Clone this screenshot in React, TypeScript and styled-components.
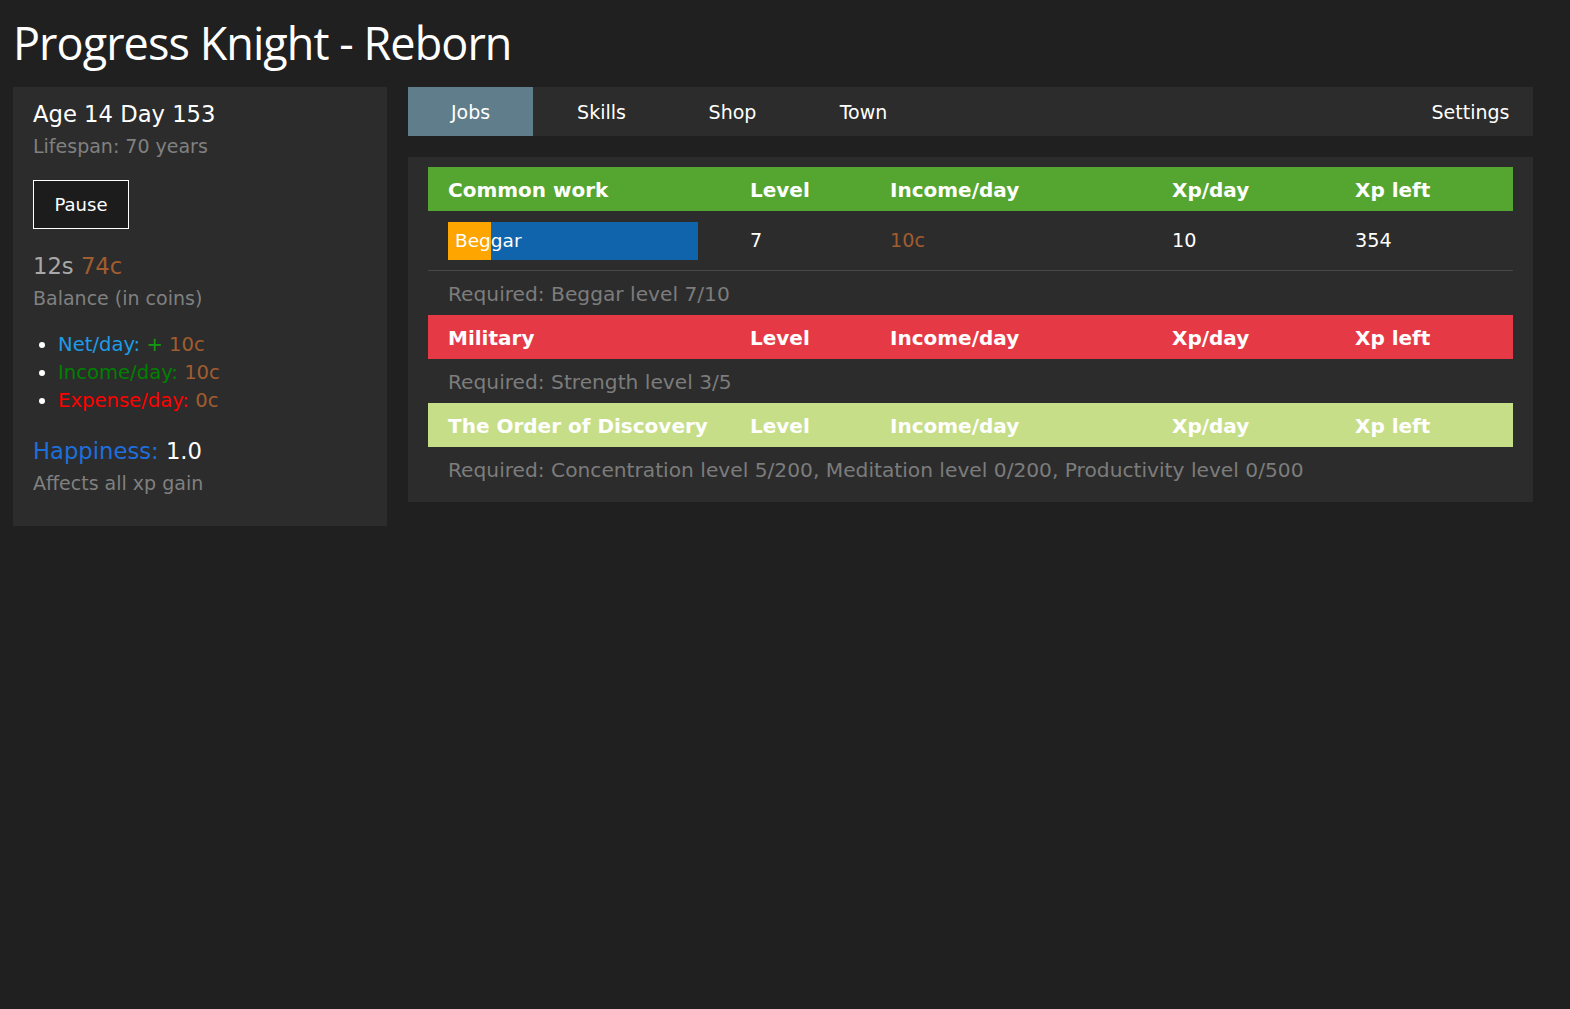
import React from "react";
import styled, { createGlobalStyle } from "styled-components";

const Global = createGlobalStyle`
  html, body { margin: 0; padding: 0; background: #202020; }
  body { font-family: "DejaVu Sans", Verdana, sans-serif; color: #ffffff; }
  * { box-sizing: border-box; }
`;

const Page = styled.div`
  padding: 13px 37px 0 13px;
  min-height: 1009px;
`;

const Title = styled.h1`
  margin: 0 0 14px 0;
  font-family: "Open Sans", sans-serif;
  font-weight: 400;
  font-size: 45px;
  line-height: 60px;
  letter-spacing: -0.95px;
  color: #ffffff;
`;

const Layout = styled.div`
  display: flex;
  align-items: flex-start;
  gap: 21px;
`;

const Side = styled.div`
  width: 374px;
  flex: none;
  background: #2c2c2c;
  padding: 11px 20px 27px 20px;
`;

const Big = styled.div<{ $color?: string }>`
  font-size: 22.7px;
  line-height: 32px;
  color: ${(p) => p.$color || "#ffffff"};
`;

const Sub = styled.div`
  font-size: 19px;
  line-height: 32px;
  color: #808080;
`;

const PauseButton = styled.button`
  display: block;
  margin: 18px 0 21px 0;
  width: 96px;
  height: 49px;
  background: #1c1c1c;
  border: 1px solid #ffffff;
  color: #ffffff;
  font-family: "DejaVu Sans", Verdana, sans-serif;
  font-size: 18px;
  padding: 0;
`;

const C = styled.span<{ $c: string }>`
  color: ${(p) => p.$c};
`;

const List = styled.ul`
  margin: 17px 0 20px 0;
  padding-left: 25px;
  font-size: 19.6px;
  line-height: 28px;
  li::marker { color: #ffffff; }
`;

const Main = styled.div`
  flex: 1;
  display: flex;
  flex-direction: column;
  gap: 21px;
`;

const Nav = styled.div`
  display: flex;
  gap: 6px;
  height: 49px;
  background: #2c2c2c;
`;

const Tab = styled.div<{ $active?: boolean; $right?: boolean }>`
  width: 125px;
  display: flex;
  align-items: center;
  justify-content: center;
  font-size: 19px;
  background: ${(p) => (p.$active ? "#607d8b" : "transparent")};
  margin-left: ${(p) => (p.$right ? "auto" : "0")};
  color: #ffffff;
`;

const Panel = styled.div`
  background: #2c2c2c;
  padding: 10px 20px 11px 20px;
`;

const Row = styled.div`
  display: grid;
  grid-template-columns: 322px 140px 282px 183px 1fr;
  align-items: center;
`;

const HeadRow = styled(Row)<{ $bg: string }>`
  background: ${(p) => p.$bg};
  height: 44px;
  padding-top: 1px;
  font-family: "DejaVu Sans", Verdana, sans-serif;
  font-weight: 700;
  font-size: 20px;
  color: #ffffff;
  & > div:first-child { padding-left: 20px; }
`;

const JobRow = styled(Row)`
  height: 60px;
  border-bottom: 1px solid #474747;
  font-size: 19.2px;
  & > div:first-child { padding-left: 20px; }
`;

const Bar = styled.div`
  position: relative;
  width: 250px;
  height: 38px;
  background: #0f64ab;
  display: flex;
  align-items: center;
  padding-left: 7px;
`;

const BarFill = styled.div`
  position: absolute;
  left: 0;
  top: 0;
  bottom: 0;
  background: #ffa500;
`;

const BarLabel = styled.span`
  position: relative;
  color: #ffffff;
  font-size: 18.5px;
`;

const Required = styled.div`
  height: 44px;
  display: flex;
  align-items: center;
  padding: 2px 0 0 20px;
  font-size: 20.2px;
  color: #7c7c7c;
`;

const headers = ["Level", "Income/day", "Xp/day", "Xp left"];

function Header({ name, bg }: { name: string; bg: string }) {
  return (
    <HeadRow $bg={bg}>
      <div>{name}</div>
      {headers.map((h) => (
        <div key={h}>{h}</div>
      ))}
    </HeadRow>
  );
}

export default function App() {
  return (
    <>
      <Global />
      <Page>
        <Title>Progress Knight - Reborn</Title>
        <Layout>
          <Side>
            <Big>Age 14 Day 153</Big>
            <Sub>Lifespan: 70 years</Sub>
            <PauseButton>Pause</PauseButton>
            <Big>
              <C $c="#a8a8a8">12s</C> <C $c="#a15c2f">74c</C>
            </Big>
            <Sub>Balance (in coins)</Sub>
            <List>
              <li>
                <C $c="#1e9be8">Net/day: </C>
                <C $c="#119a11">+</C> <C $c="#a15c2f">10c</C>
              </li>
              <li>
                <C $c="#008000">Income/day: </C>
                <C $c="#a15c2f">10c</C>
              </li>
              <li>
                <C $c="#ff0000">Expense/day: </C>
                <C $c="#a15c2f">0c</C>
              </li>
            </List>
            <Big>
              <C $c="#1e6fdc">Happiness: </C>
              <C $c="#ffffff">1.0</C>
            </Big>
            <Sub>Affects all xp gain</Sub>
          </Side>
          <Main>
            <Nav>
              <Tab $active>Jobs</Tab>
              <Tab>Skills</Tab>
              <Tab>Shop</Tab>
              <Tab>Town</Tab>
              <Tab $right>Settings</Tab>
            </Nav>
            <Panel>
              <Header name="Common work" bg="#55a630" />
              <JobRow>
                <div>
                  <Bar>
                    <BarFill style={{ width: "17%" }} />
                    <BarLabel>Beggar</BarLabel>
                  </Bar>
                </div>
                <div>7</div>
                <div>
                  <C $c="#a15c2f">10c</C>
                </div>
                <div>10</div>
                <div>354</div>
              </JobRow>
              <Required>Required: Beggar level 7/10</Required>
              <Header name="Military" bg="#e63946" />
              <Required>Required: Strength level 3/5</Required>
              <Header name="The Order of Discovery" bg="#c7de88" />
              <Required>
                Required: Concentration level 5/200, Meditation level 0/200, Productivity level 0/500
              </Required>
            </Panel>
          </Main>
        </Layout>
      </Page>
    </>
  );
}
